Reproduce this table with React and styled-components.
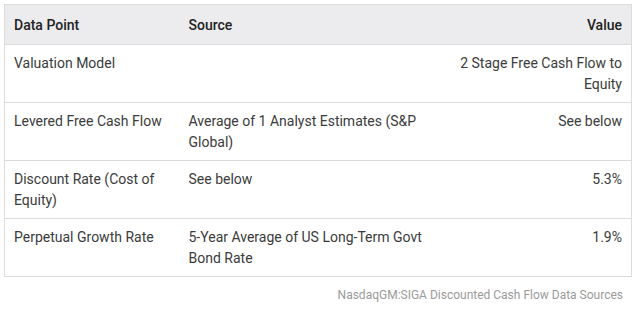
import React from 'react';
import styled, { createGlobalStyle } from 'styled-components';

const GlobalStyle = createGlobalStyle`
  html, body {
    margin: 0;
    padding: 0;
    background: #fff;
  }
  body {
    font-family: Roboto, "Liberation Sans", sans-serif;
  }
`;

const Wrapper = styled.div`
  width: 628px;
  padding: 4px 0 0 4px;
`;

const Table = styled.table`
  width: 628px;
  border-collapse: collapse;
  table-layout: fixed;
  border: 1px solid #dcdcdc;
  font-size: 14px;
  line-height: 21px;
  color: #3b3b3b;
`;

const HeadCell = styled.th`
  background: #ececee;
  font-weight: 500;
  color: #222;
  text-align: ${p => (p.$right ? 'right' : 'left')};
  padding: 10px 9px 8px;
  border-bottom: 1px solid #dcdcdc;
`;

const Row = styled.tr`
  border-bottom: 1px solid #dcdcdc;
`;

const Cell = styled.td`
  vertical-align: top;
  text-align: ${p => (p.$right ? 'right' : 'left')};
  padding: 8px 9px 7px;
  height: 42px;
`;

const Caption = styled.div`
  text-align: right;
  font-size: 12px;
  line-height: 14px;
  color: #9a9a9a;
  padding: 11px 9px 0 0;
`;

const rows = [
  { point: 'Valuation Model', source: '', value: '2 Stage Free Cash Flow to Equity' },
  { point: 'Levered Free Cash Flow', source: 'Average of 1 Analyst Estimates (S&P Global)', value: 'See below' },
  { point: 'Discount Rate (Cost of Equity)', source: 'See below', value: '5.3%' },
  { point: 'Perpetual Growth Rate', source: '5-Year Average of US Long-Term Govt Bond Rate', value: '1.9%' },
];

export default function App() {
  return (
    <Wrapper>
      <GlobalStyle />
      <Table>
        <colgroup>
          <col style={{ width: 175 }} />
          <col style={{ width: 255 }} />
          <col />
        </colgroup>
        <thead>
          <tr>
            <HeadCell>Data Point</HeadCell>
            <HeadCell>Source</HeadCell>
            <HeadCell $right>Value</HeadCell>
          </tr>
        </thead>
        <tbody>
          {rows.map(r => (
            <Row key={r.point}>
              <Cell>{r.point}</Cell>
              <Cell>{r.source}</Cell>
              <Cell $right>{r.value}</Cell>
            </Row>
          ))}
        </tbody>
      </Table>
      <Caption>NasdaqGM:SIGA Discounted Cash Flow Data Sources</Caption>
    </Wrapper>
  );
}
